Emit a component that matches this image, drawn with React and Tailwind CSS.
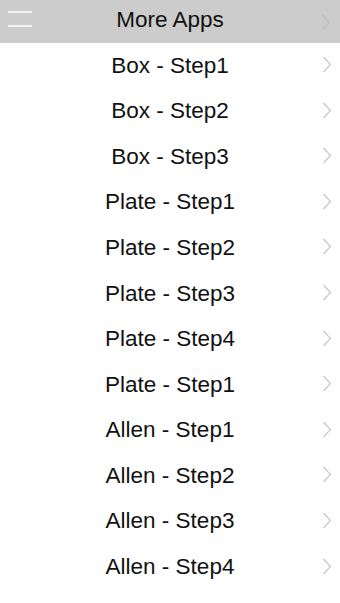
import React from "react";

const items = [
  "Box - Step1",
  "Box - Step2",
  "Box - Step3",
  "Plate - Step1",
  "Plate - Step2",
  "Plate - Step3",
  "Plate - Step4",
  "Plate - Step1",
  "Allen - Step1",
  "Allen - Step2",
  "Allen - Step3",
  "Allen - Step4",
];

function Chevron({ color }) {
  return (
    <svg width="10" height="17" viewBox="0 0 10 17" fill="none">
      <path d="M1.5 1 L8.5 8.5 L1.5 16" stroke={color} strokeWidth="1.1" />
    </svg>
  );
}

export default function App() {
  return (
    <div
      className="w-[340px] h-[603px] bg-white overflow-hidden text-[#111]"
      style={{ fontFamily: '"Liberation Sans", Arial, sans-serif' }}
    >
      <div className="relative h-[43px] bg-[#cccccc] flex items-center justify-center">
        <div className="absolute left-[8px] top-[11px] flex flex-col gap-[12px]">
          <div className="w-[24px] h-[2px] bg-[#f4f4f4]" />
          <div className="w-[24px] h-[2px] bg-[#f4f4f4]" />
        </div>
        <span className="text-[22.5px] leading-none -mt-[2px]">More Apps</span>
        <div className="absolute right-[9px] top-[14px]">
          <Chevron color="#bcbcbc" />
        </div>
      </div>
      {items.map((t, i) => (
        <div key={i} className="relative h-[45.6px] flex items-center justify-center">
          <span className="text-[22.5px] leading-none">{t}</span>
          <div className="absolute right-[8px] top-[13px]">
            <Chevron color="#c4c4c4" />
          </div>
        </div>
      ))}
    </div>
  );
}
